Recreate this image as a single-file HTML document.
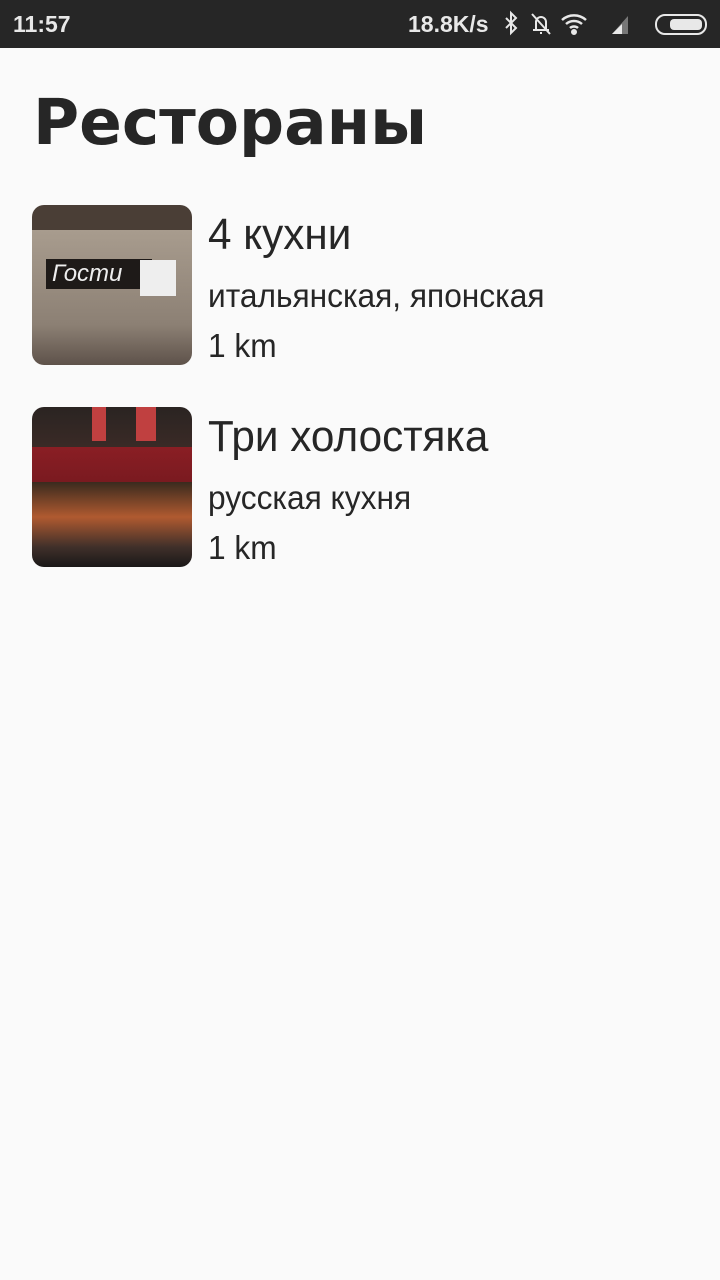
<!DOCTYPE html>
<html><head><meta charset="utf-8"><style>
body{margin:0;width:720px;height:1280px;background:#fafafa;font-family:"Liberation Sans",sans-serif;color:#222;position:relative;overflow:hidden}
.sb{position:absolute;top:0;left:0;width:720px;height:48px;background:#262626;color:#e8e8e8;font-family:"Liberation Sans",sans-serif;font-weight:bold;font-size:23px}
.h{position:absolute;left:33px;top:86px;font-family:"DejaVu Sans",sans-serif;font-weight:bold;font-size:63px;color:#262626}
.img{position:absolute;left:32px;width:160px;height:160px;border-radius:12px;overflow:hidden}
.t{position:absolute;left:208px;white-space:nowrap;color:#262626;transform-origin:0 0;transform:scaleX(.96)}
</style></head><body>
<div class="sb"><span style="position:absolute;left:13px;top:11px">11:57</span>
<span style="position:absolute;left:408px;top:11px">18.8K/s</span>
<svg style="position:absolute;left:498px;top:10px" width="220" height="28" viewBox="0 0 220 28" fill="none" stroke="#e8e8e8" stroke-width="2">
<path d="M8 8l10 10-5 5V3l5 5-10 10"/>
<path d="M35 20h16M38 20v-8a5 5 0 0 1 10 0v8M42 23h2M34 4l18 20"/>
<path d="M64 10a18 18 0 0 1 24 0M68 14a12 12 0 0 1 16 0M72 18a6 6 0 0 1 8 0" stroke-width="2.5"/><circle cx="76" cy="22" r="2" fill="#e8e8e8"/>
<path d="M114 24h16V6z" fill="#777" stroke="none"/><path d="M114 24h10v-10z" fill="#e8e8e8" stroke="none"/>
<rect x="158" y="5" width="50" height="19" rx="9"/><rect x="172" y="9" width="32" height="11" rx="4" fill="#e8e8e8" stroke="none"/>
</svg></div>
<div class="h">Рестораны</div>
<div class="img" style="top:205px;background:linear-gradient(180deg,#4a3e36 0,#4a3e36 25px,#a89c8e 25px,#8c8074 120px,#5e524a 160px)">
<div style="position:absolute;left:14px;top:54px;width:100px;height:30px;background:#1e1a18;color:#eee;font-style:italic;font-size:24px;line-height:30px;padding-left:6px">Гости</div>
<div style="position:absolute;left:108px;top:55px;width:36px;height:36px;background:#eee"></div>
</div>
<div class="t" style="top:210px;font-size:44px">4 кухни</div>
<div class="t" style="top:277px;font-size:33px">итальянская, японская</div>
<div class="t" style="top:327px;font-size:33px">1 km</div>
<div class="img" style="top:407px;background:linear-gradient(180deg,#2a2422 0,#3a2a26 40px,#8a1e24 40px,#7a1a20 75px,#3a2a1e 75px,#b05a30 110px,#40302a 140px,#1a1818 160px)">
<div style="position:absolute;left:60px;top:0;width:14px;height:34px;background:#c04040"></div>
<div style="position:absolute;left:104px;top:0;width:20px;height:34px;background:#c04040"></div>
</div>
<div class="t" style="top:412px;font-size:44px">Три холостяка</div>
<div class="t" style="top:479px;font-size:33px">русская кухня</div>
<div class="t" style="top:529px;font-size:33px">1 km</div>
</body></html>
